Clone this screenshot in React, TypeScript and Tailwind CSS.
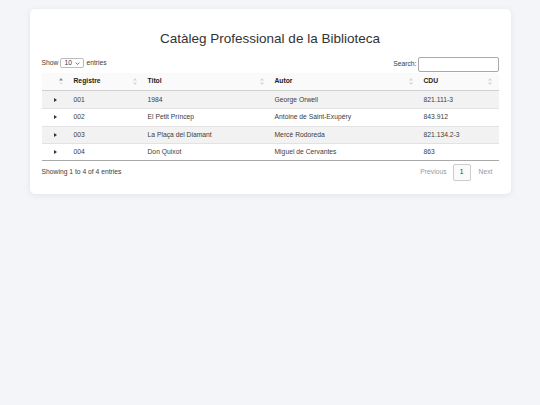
import { useState } from "react";

type Book = { reg: string; titol: string; autor: string; cdu: string };

const books: Book[] = [
  { reg: "001", titol: "1984", autor: "George Orwell", cdu: "821.111-3" },
  { reg: "002", titol: "El Petit Príncep", autor: "Antoine de Saint-Exupéry", cdu: "843.912" },
  { reg: "003", titol: "La Plaça del Diamant", autor: "Mercè Rodoreda", cdu: "821.134.2-3" },
  { reg: "004", titol: "Don Quixot", autor: "Miguel de Cervantes", cdu: "863" },
];

const cols = "grid grid-cols-[26px_74px_127px_149px_79px]";

function SortIcon({ active }: { active?: boolean }) {
  return (
    <svg width="4" height="7" viewBox="0 0 4 7" className="shrink-0">
      <path d="M2 0 L4 2.6 L0 2.6 Z" fill={active ? "#888" : "#d6d6d6"} />
      <path d="M2 7 L4 4.4 L0 4.4 Z" fill={active ? "#e4e4e4" : "#d6d6d6"} />
    </svg>
  );
}

function Th({ label, active }: { label?: string; active?: boolean }) {
  return (
    <div className="flex items-center justify-between pl-[6px] pr-[5px] font-bold text-[#222]">
      <span>{label}</span>
      <SortIcon active={active} />
    </div>
  );
}

export default function App() {
  const [query, setQuery] = useState("");
  const rows = books.filter((b) =>
    [b.reg, b.titol, b.autor, b.cdu].join(" ").toLowerCase().includes(query.toLowerCase())
  );

  return (
    <main
      className="min-h-[405px] bg-[#f4f5f9] pt-[9px] text-[#3c3c3c]"
      style={{ fontFamily: '"Liberation Sans", Arial, sans-serif' }}
    >
      <div className="mx-auto w-[481px] rounded-[5px] bg-white px-[12px] pb-[13px] pt-[21px] shadow-[0_1px_6px_rgba(0,0,0,0.08)]">
        <h1 className="text-center text-[13.5px] leading-[18px] text-[#333]">Catàleg Professional de la Biblioteca</h1>

        <div className="mt-[9px] flex h-[16px] items-start justify-between text-[6.75px]">
          <div className="mt-[1px] flex items-center gap-[2px]">
            <span>Show</span>
            <div className="flex h-[10px] w-[24px] items-center justify-between rounded-[2px] border border-[#bbb] px-[3px]">
              <span>10</span>
              <svg width="5" height="3" viewBox="0 0 5 3">
                <path d="M0.6 0.6 L2.5 2.4 L4.4 0.6" stroke="#444" strokeWidth="0.7" fill="none" />
              </svg>
            </div>
            <span>entries</span>
          </div>
          <label className="flex items-center gap-[1px]">
            <span>Search:</span>
            <input
              value={query}
              onChange={(e) => setQuery(e.target.value)}
              className="h-[15px] w-[81px] rounded-[2px] border border-[#aaa] px-[2px] text-[6.75px] outline-none"
            />
          </label>
        </div>

        <div className="text-[6.75px]">
          <div className={`${cols} h-[18px] border-b border-[#cfcfcf] bg-[#fafafa]`}>
            <Th active />
            <Th label="Registre" />
            <Th label="Titol" />
            <Th label="Autor" />
            <Th label="CDU" />
          </div>
          {rows.map((b, i) => (
            <div
              key={b.reg}
              className={`${cols} h-[17.25px] items-center ${i > 0 ? "border-t border-[#e2e2e2]" : ""} ${
                i % 2 === 0 ? "bg-[#f2f2f2]" : "bg-white"
              }`}
            >
              <div className="flex justify-center pl-[2px]">
                <svg width="3" height="4" viewBox="0 0 3 4">
                  <path d="M0 0 L3 2 L0 4 Z" fill="#333" />
                </svg>
              </div>
              <div className="pl-[6px]">{b.reg}</div>
              <div className="pl-[6px]">{b.titol}</div>
              <div className="pl-[6px]">{b.autor}</div>
              <div className="pl-[6px]">{b.cdu}</div>
            </div>
          ))}
          <div className="border-t border-[#aaa]" />

          <div className="mt-[2px] flex h-[18px] items-center justify-between">
            <span>Showing 1 to {rows.length} of {rows.length} entries</span>
            <div className="flex items-center pr-[6px] text-[#999]">
              <span className="px-[6px]">Previous</span>
              <span className="flex h-[17px] w-[18px] items-center justify-center rounded-[2px] border border-[#ccc] bg-[#fafafa] text-[#333]">
                1
              </span>
              <span className="pl-[8px]">Next</span>
            </div>
          </div>
        </div>
      </div>
    </main>
  );
}
